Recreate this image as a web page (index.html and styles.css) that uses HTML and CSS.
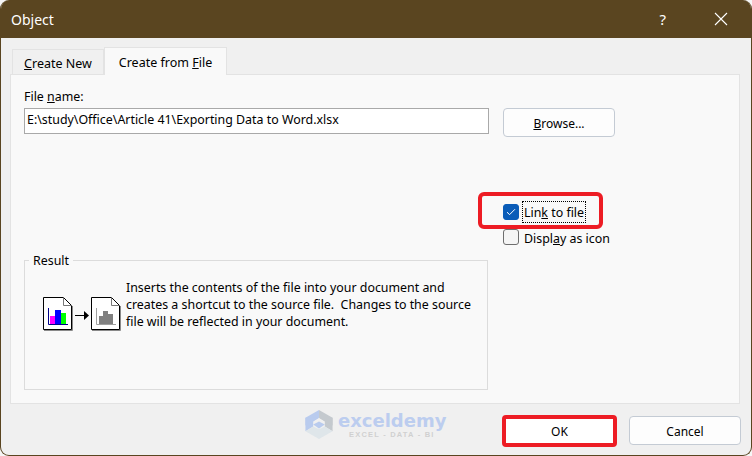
FILE: index.html
```html
<!DOCTYPE html>
<html lang="en">
<head>
<meta charset="utf-8">
<title>Object</title>
<link rel="stylesheet" href="styles.css">
</head>
<body>
<div class="dialog">
  <header class="titlebar">
    <span class="title">Object</span>
    <span class="help">?</span>
    <svg class="close" width="16" height="16" viewBox="0 0 16 16"><path d="M2 2 14 14M14 2 2 14" stroke="#fff" stroke-width="1.1" fill="none"/></svg>
  </header>
  <div class="tabs">
    <div class="tab"><span><u>C</u>reate New</span></div>
    <div class="tab active"><span>Create from <u>F</u>ile</span></div>
  </div>
  <main class="panel">
    <div class="form">
      <div class="left">
        <label class="file-label">File <u>n</u>ame:</label>
        <div class="input">E:\study\Office\Article 41\Exporting Data to Word.xlsx</div>
      </div>
      <div class="right">
        <div class="btn browse"><span><u>B</u>rowse...</span></div>
      </div>
    </div>
    <div class="options">
      <div class="check-row highlight">
        <span class="box checked"><svg width="10" height="8" viewBox="0 0 10 8"><path d="M1 4.2 3.6 6.6 9 1.2" stroke="#fff" stroke-width="1" fill="none"/></svg></span>
        <span class="focus">Lin<u>k</u> to file</span>
      </div>
      <div class="check-row">
        <span class="box"></span>
        <span class="plain">Displ<u>a</u>y as icon</span>
      </div>
    </div>
    <section class="result">
      <span class="legend">Result</span>
      <div class="result-body">
        <svg class="icons" width="85" height="38" viewBox="0 0 85 38">
          <path d="M4 35.500H32.500V11" fill="none" stroke="#8a8a8a"/>
          <path d="M3.500 2.500H23.500L31.500 10.500V34.500H3.500Z" fill="#fff" stroke="#000"/>
          <path d="M23.500 2.500V10.500H31.500" fill="none" stroke="#777"/>
          <rect x="10" y="21" width="5" height="8" fill="#f0f"/>
          <rect x="15" y="15" width="6" height="14" fill="#00f"/>
          <rect x="21" y="18" width="5" height="11" fill="#0f0"/>
          <path d="M8.500 13V29.500H28" fill="none" stroke="#00008a"/>
          <path d="M35 20.500H45" stroke="#000"/>
          <path d="M44 16 49 20.500 44 25Z" fill="#000"/>
          <path d="M52 35.500H80.500V11" fill="none" stroke="#8a8a8a"/>
          <path d="M51.500 2.500H71.500L79.500 10.500V34.500H51.500Z" fill="#fff" stroke="#000"/>
          <path d="M71.500 2.500V10.500H79.500" fill="none" stroke="#777"/>
          <path d="M59 29V21H63V16H68V19H73V29Z" fill="#808080"/>
          <path d="M56.500 13V29.500H76" fill="none" stroke="#a0a0a0"/>
        </svg>
        <p class="desc">Inserts the contents of the file into your document and creates a shortcut to the source file.&nbsp; Changes to the source file will be reflected in your document.</p>
      </div>
    </section>
  </main>
  <footer class="footer">
    <div class="watermark">
      <svg width="28" height="31" viewBox="0 0 28 32">
        <path d="M14 1 28 9V17L14 9Z" fill="#c4c9ce"/>
        <path d="M14 1 0 9V17L14 9Z" fill="#b9cbee"/>
        <path d="M0 9V23L8 18V13L14 9Z" fill="#b9cbee"/>
        <path d="M28 9V23L20 18V13L14 9Z" fill="#c4c9ce"/>
        <path d="M0 23 14 31 28 23 20 18 14 21 8 18Z" fill="#dfe6ea"/>
        <path d="M8 16 14 13 20 16 14 20Z" fill="#b9cbee"/>
      </svg>
      <div class="wm-text">
        <span class="wm-name">exceldemy</span>
        <span class="wm-sub">EXCEL - DATA - BI</span>
      </div>
    </div>
    <div class="btn ok"><span>OK</span></div>
    <div class="btn"><span>Cancel</span></div>
  </footer>
</div>
</body>
</html>
```
FILE: styles.css
```css
*, *::before { box-sizing: border-box; }
html, body { margin: 0; padding: 0; background: #f6f6f6; }
body { width: 752px; height: 456px; overflow: hidden; font-family: "Noto Sans", "Open Sans", sans-serif; font-size: 12.4px; color: #000; }
.dialog { width: 752px; height: 456px; background: #f0f0f0; border-radius: 9px; border: 1px solid #5a4520; border-top: 0; overflow: hidden; display: flex; flex-direction: column; }
.titlebar { height: 38px; flex: none; background: #5a4520; color: #fff; display: flex; align-items: center; padding: 0 0 0 10px; }
.title { font-size: 14px; flex: 1; }
.help { font-size: 15px; margin-right: 47px; }
.close { margin-right: 22px; }
.tabs { height: 36px; flex: none; display: flex; align-items: flex-end; padding-left: 11px; position: relative; z-index: 1; }
.tab { height: 25px; width: 92px; padding-top: 2px; background: #f0f0f0; border: 1px solid #e3e3e3; border-bottom: 0; display: flex; align-items: center; justify-content: center; font-size: 12.5px; }
.tab.active { width: 123px; height: 28px; padding-top: 2px; background: #f9f9f9; margin-bottom: -1px; }
.panel { width: 730px; height: 330px; flex: none; margin-left: 9px; background: #f9f9f9; border: 1px solid #e3e3e3; padding: 14px 12px 0 13px; }
.form { display: flex; }
.left { width: 465px; }
.file-label { display: block; height: 19px; line-height: 16px; }
.input { height: 26px; border: 1px solid #a9a9a9; background: #fff; padding-left: 2px; line-height: 22px; white-space: nowrap; }
.right { padding: 19px 0 0 14px; }
.btn { width: 112px; height: 29px; padding-top: 1px; background: #fdfdfd; border: 1px solid #c4cbd4; border-radius: 4px; display: flex; align-items: center; justify-content: center; font-size: 12px; }
.options { margin: 67px 0 0 479px; display: flex; flex-direction: column; gap: 9px; }
.check-row { display: flex; align-items: center; height: 16px; gap: 5px; position: relative; }
.highlight::before { content: ""; position: absolute; left: -25px; top: -12px; width: 125px; height: 37px; border: 4px solid #ed1c24; border-radius: 6px; }
.box { width: 16px; height: 16px; flex: none; border: 1px solid #6e6e6e; border-radius: 3px; background: #f5f5f5; display: flex; align-items: center; justify-content: center; }
.box.checked { background: #0a5cb8; border-color: #0a5cb8; }
.focus { outline: 1px dotted #000; line-height: 18px; padding: 2px 1px 0; margin-left: -1px; }
.plain { padding-top: 2px; }
.result { position: relative; width: 464px; height: 130px; margin-top: 15px; border: 1px solid #dcdcdc; padding: 19px 0 0 15px; }
.legend { position: absolute; left: 4px; top: -7px; padding: 0 4px; background: #f9f9f9; line-height: 14px; }
.result-body { display: flex; }
.icons { margin-top: 15px; flex: none; }
.desc { margin: -1px 0 0 1px; width: 352px; line-height: 17px; }
.footer { flex: 1; display: flex; align-items: flex-start; padding: 12px 0 0 501px; gap: 12px; position: relative; }
.ok { width: 115px; height: 32px; margin-top: -1px; border: 4px solid #ed1c24; background: #fff; }
.watermark { position: absolute; left: 304px; top: 5px; display: flex; gap: 5px; align-items: flex-start; }
.wm-text { display: flex; flex-direction: column; align-items: flex-start; padding-top: 2px; }
.wm-name { font: bold 18px/19px "DejaVu Sans", sans-serif; color: #bccdef; }
.wm-sub { font: bold 7.5px/9px "Liberation Sans", sans-serif; color: #d0d0d0; letter-spacing: 1.2px; margin-left: 11px; }
```
